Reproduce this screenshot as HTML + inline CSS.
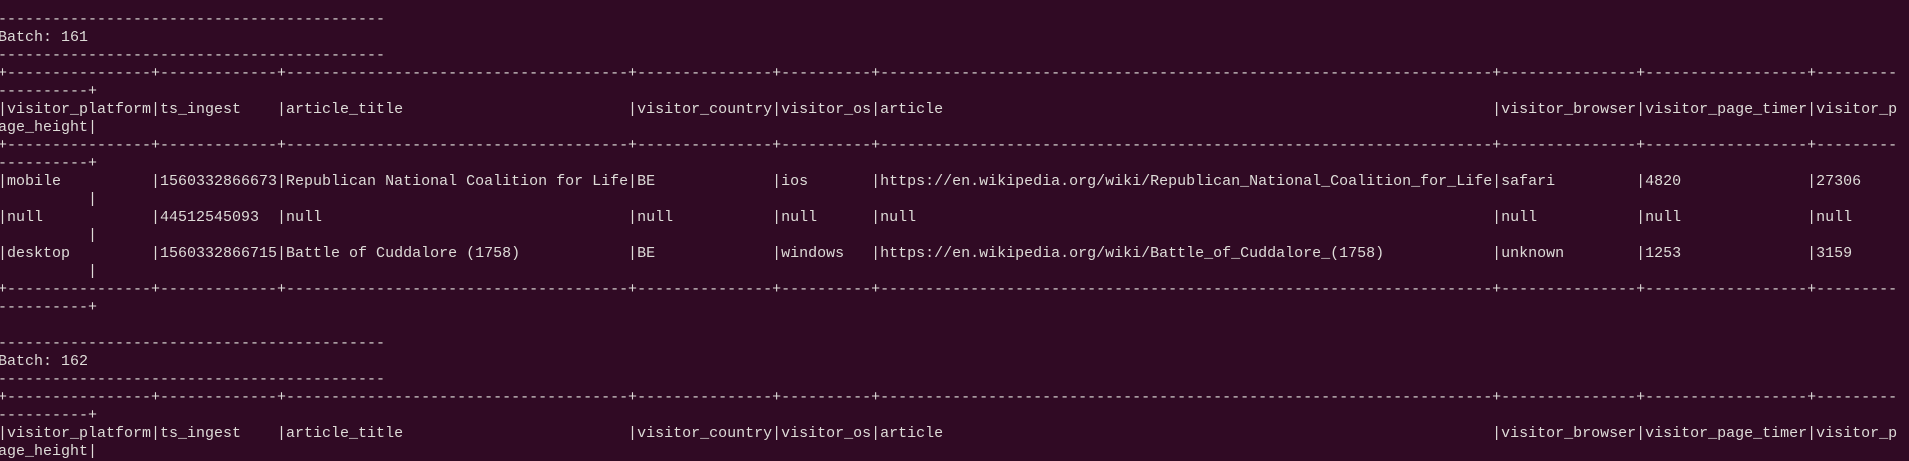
<!DOCTYPE html>
<html><head><meta charset="utf-8"><style>
html,body{margin:0;padding:0;background:#300a24;width:1909px;height:455px;overflow:hidden}
#t{position:absolute;left:-2px;top:11px;font-family:"Liberation Mono",monospace;font-size:15px;color:#dedcd8}
.l{height:18px;line-height:18px;white-space:pre}
.l span{display:inline-block;overflow:hidden;vertical-align:top;height:18px;line-height:18px;white-space:pre}
.d::before{content:"--------------------------------------------------------------------------------------------------------------"}
.a{width:144px}.b{width:117px}.c{width:342px}.e{width:135px}.f{width:90px}.g{width:612px}.h{width:162px}.i{width:81px}.j{width:90px}.k{width:387px}
</style></head><body><div id="t"><div class="l"><span class="d k"></span></div><div class="l">Batch: 161</div><div class="l"><span class="d k"></span></div><div class="l">+<span class="d a"></span>+<span class="d b"></span>+<span class="d c"></span>+<span class="d e"></span>+<span class="d f"></span>+<span class="d g"></span>+<span class="d e"></span>+<span class="d h"></span>+<span class="d i"></span></div><div class="l"><span class="d j"></span>+</div><div class="l">|<span class="a">visitor_platform</span>|<span class="b">ts_ingest</span>|<span class="c">article_title</span>|<span class="e">visitor_country</span>|<span class="f">visitor_os</span>|<span class="g">article</span>|<span class="e">visitor_browser</span>|<span class="h">visitor_page_timer</span>|<span class="i">visitor_p</span></div><div class="l"><span class="j">age_height</span>|</div><div class="l">+<span class="d a"></span>+<span class="d b"></span>+<span class="d c"></span>+<span class="d e"></span>+<span class="d f"></span>+<span class="d g"></span>+<span class="d e"></span>+<span class="d h"></span>+<span class="d i"></span></div><div class="l"><span class="d j"></span>+</div><div class="l">|<span class="a">mobile</span>|<span class="b">1560332866673</span>|<span class="c">Republican National Coalition for Life</span>|<span class="e">BE</span>|<span class="f">ios</span>|<span class="g">https://en.wikipedia.org/wiki/Republican_National_Coalition_for_Life</span>|<span class="e">safari</span>|<span class="h">4820</span>|<span class="i">27306</span></div><div class="l"><span class="j"></span>|</div><div class="l">|<span class="a">null</span>|<span class="b">44512545093</span>|<span class="c">null</span>|<span class="e">null</span>|<span class="f">null</span>|<span class="g">null</span>|<span class="e">null</span>|<span class="h">null</span>|<span class="i">null</span></div><div class="l"><span class="j"></span>|</div><div class="l">|<span class="a">desktop</span>|<span class="b">1560332866715</span>|<span class="c">Battle of Cuddalore (1758)</span>|<span class="e">BE</span>|<span class="f">windows</span>|<span class="g">https://en.wikipedia.org/wiki/Battle_of_Cuddalore_(1758)</span>|<span class="e">unknown</span>|<span class="h">1253</span>|<span class="i">3159</span></div><div class="l"><span class="j"></span>|</div><div class="l">+<span class="d a"></span>+<span class="d b"></span>+<span class="d c"></span>+<span class="d e"></span>+<span class="d f"></span>+<span class="d g"></span>+<span class="d e"></span>+<span class="d h"></span>+<span class="d i"></span></div><div class="l"><span class="d j"></span>+</div><div class="l"></div><div class="l"><span class="d k"></span></div><div class="l">Batch: 162</div><div class="l"><span class="d k"></span></div><div class="l">+<span class="d a"></span>+<span class="d b"></span>+<span class="d c"></span>+<span class="d e"></span>+<span class="d f"></span>+<span class="d g"></span>+<span class="d e"></span>+<span class="d h"></span>+<span class="d i"></span></div><div class="l"><span class="d j"></span>+</div><div class="l">|<span class="a">visitor_platform</span>|<span class="b">ts_ingest</span>|<span class="c">article_title</span>|<span class="e">visitor_country</span>|<span class="f">visitor_os</span>|<span class="g">article</span>|<span class="e">visitor_browser</span>|<span class="h">visitor_page_timer</span>|<span class="i">visitor_p</span></div><div class="l"><span class="j">age_height</span>|</div></div></body></html>
